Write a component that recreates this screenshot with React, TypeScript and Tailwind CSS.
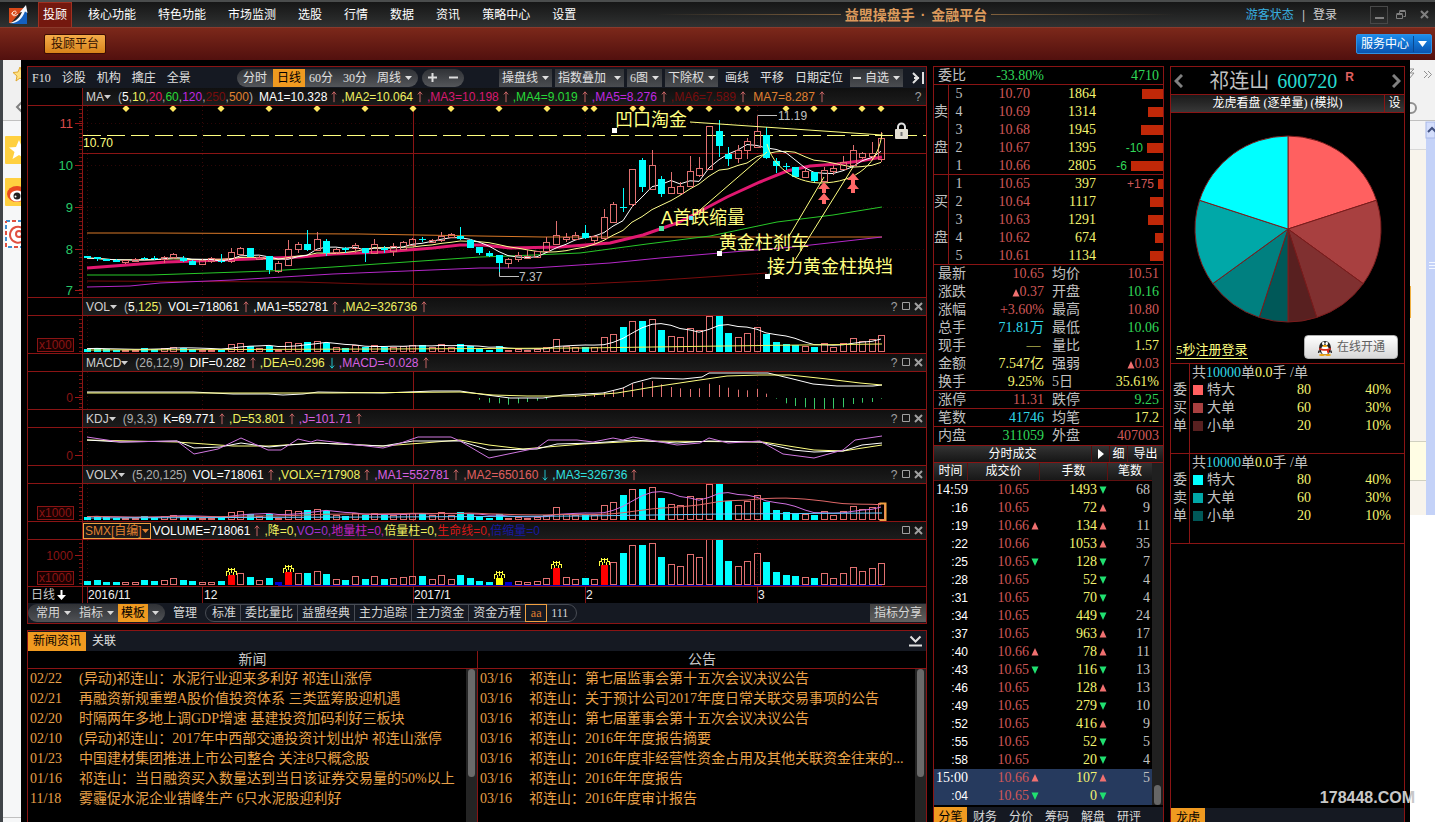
import React from 'react';

const SERIF = "font-[family-name:'Liberation_Serif','Noto_Sans_CJK_SC',serif]";
const SANS = "font-[family-name:'Liberation_Sans','Noto_Sans_CJK_SC',sans-serif]";

// [rising, high, body top, body bottom, low], in thirds of a pixel
type Candle = [number, number, number, number, number];

const CANDLES: Candle[] = [
    [0, 498, 498, 504, 504], [0, 501, 502, 507, 512], [0, 506, 507, 512, 514], [0, 508, 511, 515, 517],
    [1, 510, 511, 517, 522], [1, 505, 506, 514, 515], [0, 500, 503, 508, 510], [0, 498, 505, 507, 510],
    [1, 499, 500, 508, 520], [1, 489, 493, 500, 508], [0, 498, 503, 512, 516], [0, 510, 512, 525, 525],
    [1, 508, 509, 523, 523], [1, 500, 505, 514, 518], [0, 491, 512, 514, 518], [1, 475, 487, 513, 518],
    [1, 472, 473, 493, 495], [0, 474, 475, 502, 502], [1, 496, 501, 506, 508], [0, 498, 498, 540, 553],
    [1, 514, 519, 542, 550], [1, 450, 478, 524, 526], [1, 456, 462, 478, 490], [0, 420, 462, 480, 482],
    [1, 427, 448, 480, 482], [0, 447, 454, 490, 498], [1, 474, 476, 486, 492], [0, 472, 475, 480, 490],
    [1, 460, 466, 474, 490], [0, 474, 475, 488, 516], [1, 447, 463, 490, 492], [0, 468, 475, 479, 490],
    [1, 460, 468, 484, 498], [1, 454, 457, 478, 480], [1, 445, 447, 464, 466], [0, 440, 447, 449, 456],
    [1, 446, 449, 455, 460], [1, 427, 437, 451, 455], [1, 430, 433, 440, 442], [0, 410, 437, 448, 450],
    [0, 446, 450, 473, 475], [0, 470, 472, 490, 495], [0, 483, 489, 497, 500], [0, 495, 495, 518, 557],
    [1, 504, 506, 518, 533], [1, 487, 495, 508, 515], [1, 480, 498, 503, 506], [1, 482, 484, 500, 505],
    [1, 442, 457, 482, 485], [1, 394, 436, 462, 462], [1, 430, 440, 446, 455], [1, 427, 434, 446, 448],
    [0, 406, 430, 445, 447], [1, 436, 438, 450, 460], [1, 358, 382, 443, 445], [1, 336, 343, 397, 400],
    [0, 294, 351, 353, 365], [1, 236, 238, 343, 350], [0, 205, 210, 290, 305], [1, 180, 226, 298, 300],
    [0, 258, 267, 311, 320], [1, 246, 292, 310, 312], [1, 275, 289, 308, 315], [1, 198, 244, 289, 292],
    [1, 202, 235, 254, 260], [1, 108, 109, 238, 240], [0, 90, 124, 168, 200], [0, 170, 192, 206, 228],
    [1, 165, 181, 205, 220], [1, 143, 154, 181, 208], [1, 77, 124, 172, 175], [0, 112, 136, 204, 206],
    [0, 205, 213, 228, 248], [0, 220, 229, 231, 240], [0, 232, 232, 260, 262], [1, 238, 244, 262, 264],
    [0, 245, 247, 273, 278], [1, 230, 241, 272, 274], [1, 226, 235, 244, 255], [1, 198, 217, 238, 240],
    [1, 165, 181, 226, 228], [1, 186, 188, 200, 208], [1, 155, 190, 197, 208], [1, 127, 143, 206, 215],
];

const VOLUMES = [
    13, 15, 10, 9, 8, 9, 16, 13, 16, 21, 15, 13, 9, 9, 12, 31, 35, 24, 15, 22, 9, 38, 35, 37, 42, 33, 19, 15, 27, 18,
    27, 19, 21, 24, 27, 28, 18, 30, 18, 31, 22, 13, 9, 22, 9, 12, 9, 12, 21, 51, 24, 18, 21, 18, 59, 69, 96, 120, 121,
    126, 84, 63, 57, 93, 84, 138, 139, 73, 57, 72, 96, 70, 40, 30, 28, 24, 21, 36, 21, 36, 54, 43, 51, 66,
];

// histogram values from bar 41 onwards
const MACD_BARS = [
    -5, -14, -16, -20, -16, -12, -8, -4, 0, 0, 3, 6, 6, 14, 20, 28, 40, 44, 48, 38, 30, 26, 24, 26, 40, 36, 28, 22, 20,
    24, 10, -2, -16, -24, -28, -34, -34, -32, -28, -18, -14, -12, -2,
];

const SIGNALS = [43, 90, 138, 186, 234, 282, 330, 368, 416, 464, 502, 511, 550, 559, 607, 626, 655, 664, 703, 731, 751, 779, 798];

const barX = (i: number) => Math.round(4 + i * 9.57);
const priceY = (v: number) => Math.round(v / 3) - 16;

const average = (values: number[], span: number) =>
    values.map((_, i) => {
        const part = values.slice(Math.max(0, i - span + 1), i + 1);
        return part.reduce((a, b) => a + b, 0) / part.length;
    });

const toPoints = (values: number[], y: (v: number) => number) =>
    values.map((v, i) => `${barX(i)},${y(v).toFixed(1)}`).join(' ');

const closes = CANDLES.map(c => (c[0] ? c[2] : c[3]));

const Caret = ({ className = '' }: { className?: string }) => (
    <svg width="7" height="4" viewBox="0 0 7 4" className={`inline-block shrink-0 ${className}`}><path d="M0 0h7L3.5 4z" fill="currentColor" /></svg>
);

const Trend = ({ down = false }: { down?: boolean }) => (
    <svg width="6" height="14" viewBox="0 0 7 14" className={down ? 'mx-1 shrink-0 text-[#22dce8]' : 'mx-1 shrink-0 text-[#e07070]'}>
        <path d={down ? 'M3.5 1v12M1 10l2.500 3L6 10' : 'M3.500 13V1M1 4l2.500-3L6 4'} fill="none" stroke="currentColor" />
    </svg>
);

const Triangle = ({ down = false }: { down?: boolean }) => (
    <svg width="8" height="8" viewBox="0 0 8 8" className="inline-block shrink-0">
        <path d={down ? 'M.5.5h7L4 8z' : 'M4 0l3.500 7.500h-7z'} fill={down ? '#20e070' : '#f07070'} />
    </svg>
);

const Gutter = ({ height, box, marks = [], ticks = 4 }: { height: number; box?: boolean; marks?: [number, string, string][]; ticks?: number }) => (
    <svg className="w-[54px] shrink-0" style={{ height }} shapeRendering="crispEdges">
        {Array.from({ length: Math.floor(height / ticks) }, (_, i) => (
            <rect key={i} x="51" y={i * ticks + 3} width="3" height="1" fill="#7a1010" />
        ))}
        {marks.map(([y, label, color]) => (
            <g key={label}>
                <rect x="47" y={y} width="7" height="1" fill="#a01818" />
                <text x="45" y={y + 5} textAnchor="end" fontSize={color === '#8a1414' ? 12 : 13} fill={color}>{label}</text>
            </g>
        ))}
        {box && (
            <g>
                <rect x="9.500" y={height - 14.5} width="36" height="13" fill="#180000" stroke="#8a1414" />
                <text x="11" y={height - 4} fontSize="12" fill="#8a1414">x1000</text>
            </g>
        )}
    </svg>
);

const Grid = () => (
    <g shapeRendering="crispEdges">
        <path d="M4.500 0V200M119.500 0V200M502.500 0V200M674.500 0V200" stroke="#3a0808" strokeDasharray="1 3" />
        <rect x="330" y="0" width="1" height="200" fill="#8a1414" />
    </g>
);

interface PanelProps {
    height: number;
    gutter: React.ReactNode;
    info: React.ReactNode;
    buttons?: string;
    children: React.ReactNode;
}

const Panel: React.FC<PanelProps> = ({ height, gutter, info, buttons = '?□✕', children }) => (
    <section>
        <div className="flex h-[18px] border-b border-[#8a1414]">
            <div className="w-[55px] shrink-0 border-r border-[#8a1414]" />
            <div className="flex min-w-0 flex-1 items-center overflow-hidden whitespace-nowrap bg-linear-to-b from-[#101010] to-[#1c1c1c] pr-0.5">
                {info}
                <div className="ml-auto flex text-[#a0a0a0]">
                    {buttons.split('').map(b => (
                        <button key={b} type="button" aria-label={b === '?' ? '帮助' : b === '□' ? '放大' : '关闭'} className="flex h-[17px] w-3 items-center justify-center">
                            {b === '?' ? '?' : (
                                <svg width="9" height="9" viewBox="0 0 9 9" fill="none" stroke="currentColor">
                                    {b === '□' ? <path d="M.5.5h7v7h-7z" /> : <path d="M1 1l7 7M8 1L1 8" strokeWidth="2" />}
                                </svg>
                            )}
                        </button>
                    ))}
                </div>
            </div>
        </div>
        <div className="flex border-b border-[#8a1414]">
            <div className="flex shrink-0 border-r border-[#8a1414]">{gutter}</div>
            <svg className="min-w-0 flex-1" style={{ height }}>{children}</svg>
        </div>
    </section>
);

const Name = ({ children }: { children: React.ReactNode }) => (
    <button type="button" className="mr-[7px] flex items-center pl-[3px] text-[#d0d0d0]">{children}<Caret /></button>
);

const VolumeBars = ({ base, max, marked = false }: { base: number; max: number; marked?: boolean }) => (
    <g shapeRendering="crispEdges">
        {VOLUMES.map((v, i) => {
            const h = Math.max(2, Math.round((v / 139) * max));
            const x = barX(i) - 3;
            const special = marked ? ({ 15: '#ff0000', 21: '#ff0000', 49: '#ff0000', 54: '#ff0000', 43: '#ffff00', 20: '#0000d0', 44: '#0000d0' } as Record<number, string>)[i] : undefined;
            if (special || !CANDLES[i][0]) {
                return <rect key={i} x={x} y={base - h} width="7" height={h} fill={special ?? '#00ffff'} />;
            }
            return <rect key={i} x={x + 0.5} y={base - h + 0.5} width="6" height={h - 1} fill="none" stroke="#e07070" />;
        })}
    </g>
);

const UpArrow = ({ x, y }: { x: number; y: number }) => (
    <path d={`M${x} ${y}l6 7h-4v4h-4v-4h-4z`} fill="#ff6868" />
);

const MainChart = () => (
    <>
        <g stroke="#2c0606" strokeDasharray="1 3"><path d="M0 17.500H843M0 59.500H843M0 101.500H843M0 143.500H843" /></g>
        <Grid />
        <rect x="0" y="47" width="100%" height="1" fill="#8a1414" />
        <path d="M0 29.500H2000" stroke="#ffff80" strokeDasharray="18 6" />
        {SIGNALS.map(x => <path key={x} d={`M${x} -1l3.500 3.500-3.500 3.500-3.500-3.500z`} fill="#ffe860" />)}

        <g fill="none">
            <polyline points="4,127 67,127 277,128 397,130 460,131 799,131" stroke="#d87828" />
            <polyline points="4,175 217,176 284,178 397,179 500,178 564,175 684,167" stroke="#780c0c" />
            <polyline points="4,169 67,169 186,165 250,161 397,151 427,150 497,147 564,138 627,130 694,116 750,109 799,101" stroke="#28c828" />
            <polyline points="4,181 47,180 77,177 150,174 250,168 397,162 450,162 527,157 577,152 637,147 710,141 799,131" stroke="#b428c8" />
            <polyline points="4,162 44,159 84,156 167,153 217,151 250,148 300,146 350,142 377,139 400,139 427,142 477,141 527,137 560,129 594,117 610,109 644,91 677,76 704,65 727,60 754,58 777,55 799,51" stroke="#e01870" strokeWidth="3" />
            <polyline points={toPoints(average(closes, 10), v => v / 3 - 16)} stroke="#ffff90" />
            <polyline points={toPoints(average(closes, 5), v => v / 3 - 16)} stroke="#ffffff" />
        </g>

        <g shapeRendering="crispEdges">
            {CANDLES.map(([up, high, top, bottom, low], i) => {
                const x = barX(i);
                const y = priceY(top);
                const h = Math.max(1, priceY(bottom) - y);
                return (
                    <g key={i} fill={up ? '#e07070' : '#00ffff'}>
                        <rect x={x} y={priceY(high)} width="1" height={priceY(top) - priceY(high)} />
                        <rect x={x} y={priceY(bottom)} width="1" height={priceY(low) - priceY(bottom)} />
                        {up ? <rect x={x - 2.5} y={y + 0.5} width="6" height={h} fill="none" stroke="#e07070" /> : <rect x={x - 3} y={y} width="7" height={h} />}
                    </g>
                );
            })}
        </g>

        <g fill="none" stroke="#ffff80">
            <path d="M607 16L799 29M684 46L610 110M741 71L705 132M770 61L712 154" />
            <path d="M684 38C690 60 710 76 737 77C775 77 796 56 799 27" />
        </g>
        <g fill="none" stroke="#c0c0c0"><path d="M674.500 9.500H694M416.500 166V170.500H436" /></g>
        <text x="695" y="14" fontSize="12" fill="#c0c0c0">11.19</text>
        <text x="436" y="175" fontSize="12" fill="#c0c0c0">7.37</text>
        <text x="0" y="41" fontSize="12" fill="#ffff80">10.70</text>
        <g fontSize="18" fill="#ffff80">
            <text x="532" y="20">凹口淘金</text>
            <text x="578" y="118">A首跌缩量</text>
            <text x="636" y="143">黄金柱刹车</text>
            <text x="684" y="167">接力黄金柱换挡</text>
        </g>
        <g fill="#ffffff">
            <rect x="529" y="22" width="5" height="5" /><rect x="576" y="120" width="5" height="5" fill="#50e0a0" />
            <rect x="606" y="110" width="4" height="4" fill="#60e0ff" /><rect x="634" y="145" width="5" height="5" /><rect x="682" y="168" width="5" height="5" />
        </g>
        <UpArrow x={741} y={76} /><UpArrow x={741} y={87} /><UpArrow x={770} y={67} /><UpArrow x={770} y={76} />
        <path d="M815 24v-3a3.500 3.500 0 0 1 7 0v3" fill="none" stroke="#e0e0e0" strokeWidth="2" />
        <rect x="812" y="23" width="13" height="10" rx="1" fill="#e4e0d4" />
        <rect x="817.500" y="26" width="2" height="4" fill="#777777" />
    </>
);

const newsItems = [
    ['02/22', '(异动)祁连山：水泥行业迎来多利好 祁连山涨停'],
    ['02/21', '再融资新规重塑A股价值投资体系 三类蓝筹股迎机遇'],
    ['02/20', '时隔两年多地上调GDP增速 基建投资加码利好三板块'],
    ['02/10', '(异动)祁连山：2017年中西部交通投资计划出炉 祁连山涨停'],
    ['01/23', '中国建材集团推进上市公司整合 关注8只概念股'],
    ['01/16', '祁连山：当日融资买入数量达到当日该证券交易量的50%以上'],
    ['11/18', '雾霾促水泥企业错峰生产 6只水泥股迎利好'],
];

const notices = [
    ['03/16', '祁连山：第七届监事会第十五次会议决议公告'],
    ['03/16', '祁连山：关于预计公司2017年度日常关联交易事项的公告'],
    ['03/16', '祁连山：第七届董事会第十五次会议决议公告'],
    ['03/16', '祁连山：2016年年度报告摘要'],
    ['03/16', '祁连山：2016年度非经营性资金占用及其他关联资金往来的...'],
    ['03/16', '祁连山：2016年年度报告'],
    ['03/16', '祁连山：2016年度审计报告'],
];

const NewsColumn = ({ title, items }: { title: string; items: string[][] }) => (
    <div className="flex min-w-0 flex-col">
        <h2 className="h-[18px] border-b border-[#8a1414] text-center text-sm leading-[17px] text-[#c8c8c8]">{title}</h2>
        <div className="flex min-h-0 flex-1">
            <ul className={`min-w-0 flex-1 text-sm leading-5 text-[#e8a048] ${SERIF}`}>
                {items.map(([date, text], i) => (
                    <li key={i} className="flex h-5 whitespace-nowrap pl-0.5">
                        <span className="w-[49px] shrink-0">{date}</span>
                        <a href="#" className="min-w-0 overflow-hidden">{text}</a>
                    </li>
                ))}
            </ul>
            <div className="w-[11px] shrink-0 bg-[#242424] px-0.5">
                <div className="h-[108px] rounded-full bg-[#6a6a6a]" />
            </div>
        </div>
    </div>
);

const asks = [['5', '10.70', 1864, ''], ['4', '10.69', 1314, ''], ['3', '10.68', 1945, ''], ['2', '10.67', 1395, '-10'], ['1', '10.66', 2805, '-6']] as const;
const bids = [['1', '10.65', 397, '+175'], ['2', '10.64', 1117, ''], ['3', '10.63', 1291, ''], ['4', '10.62', 674, ''], ['5', '10.61', 1134, '']] as const;

const RED = 'text-[#d05858]';
const GREEN = 'text-[#30d858]';
const YELLOW = 'text-[#f4f470]';
const CYAN = 'text-[#30d8e8]';

type Stat = [string, string, string, string, string, string];
const stats: Stat[] = [
    ['最新', '10.65', RED, '均价', '10.51', RED],
    ['涨跌', '▲0.37', RED, '开盘', '10.16', GREEN],
    ['涨幅', '+3.60%', RED, '最高', '10.80', RED],
    ['总手', '71.81万', CYAN, '最低', '10.06', GREEN],
    ['现手', '— ', YELLOW, '量比', '1.57', YELLOW],
    ['金额', '7.547亿', YELLOW, '强弱', '▲0.03', RED],
    ['换手', '9.25%', YELLOW, '5日', '35.61%', YELLOW],
    ['涨停', '11.31', RED, '跌停', '9.25', GREEN],
    ['笔数', '41746', CYAN, '均笔', '17.2', YELLOW],
    ['内盘', '311059', GREEN, '外盘', '407003', RED],
];

// time, price, price direction, lots, lots direction, orders
const ticks = [
    ['14:59', '10.65', '', '1493', 'd', '68'], [':16', '10.65', '', '72', 'u', '9'], [':19', '10.66', 'u', '134', 'u', '11'],
    [':22', '10.66', '', '1053', 'u', '35'], [':25', '10.65', 'd', '128', 'd', '7'], [':28', '10.65', '', '52', 'd', '4'],
    [':31', '10.65', '', '70', 'd', '4'], [':34', '10.65', '', '449', 'd', '24'], [':37', '10.65', '', '963', 'u', '17'],
    [':40', '10.66', 'u', '78', 'u', '11'], [':43', '10.65', 'd', '116', 'd', '13'], [':46', '10.65', '', '128', 'u', '13'],
    [':49', '10.65', '', '279', 'd', '10'], [':52', '10.65', '', '416', 'u', '9'], [':55', '10.65', '', '52', 'd', '5'],
    [':58', '10.65', '', '20', 'd', '4'], ['15:00', '10.66', 'u', '107', 'u', '5'], [':04', '10.65', 'd', '0', 'd', ''],
];

const BookSide = ({ side, rows }: { side: string; rows: typeof asks | typeof bids }) => (
    <tbody>
        {rows.map(([level, price, volume, delta], i) => {
            const line = i === 4 ? 'border-b border-[#8a1414] leading-[17px]' : 'leading-[18px]';
            return (
                <tr key={level}>
                    {i === 0 && (
                        <th rowSpan={5} className="border-r border-b border-[#8a1414] text-center font-normal leading-9 text-[#c0c0c0]">
                            {side}<br />盘
                        </th>
                    )}
                    <td className={`text-center text-[#c0c0c0] ${line}`}>{level}</td>
                    <td className={`text-right ${RED} ${line}`}>{price}</td>
                    <td className={`text-right ${YELLOW} ${line}`}>{volume}</td>
                    <td className={line}>
                        <div className="flex h-[17px] items-center justify-end gap-1">
                            <span className={`text-xs ${SANS} ${delta.startsWith('+') ? 'text-[#d05858]' : 'text-[#30d858]'}`}>{delta}</span>
                            <span className="h-2.5 bg-[#c02808]" style={{ width: Math.round((volume / 2805) * 32) }} />
                        </div>
                    </td>
                </tr>
            );
        })}
    </tbody>
);

const StatValue = ({ value, color }: { value: string; color: string }) => (
    <dd className={`whitespace-pre ${color}`}>{value.startsWith('▲') ? <><Triangle />{value.slice(1)}</> : value}</dd>
);

const QuotePanel = () => (
    <div className={`flex w-[231px] shrink-0 flex-col border border-b-0 border-[#8a1414] text-sm ${SERIF}`}>
        <div className="flex h-[18px] justify-between whitespace-nowrap border-b border-[#8a1414] pr-1 leading-[17px]">
            <div className="flex w-[110px] justify-between pl-1">
                <span className="text-[#c0c0c0]">委比</span>
                <span className="text-[#30d858]">-33.80%</span>
            </div>
            <span className="text-[#30d858]">4710</span>
        </div>
        <table className="w-full table-fixed border-separate border-spacing-0">
            <colgroup><col className="w-[15px]" /><col className="w-5" /><col className="w-[61px]" /><col className="w-[66px]" /><col /></colgroup>
            <BookSide side="卖" rows={asks} />
            <BookSide side="买" rows={bids} />
        </table>
        <dl>
            {stats.map(([a, av, ac, b, bv, bc], i) => (
                <div key={a} className={i > 5 && i < 9 ? 'flex h-[18px] border-b border-[#8a1414] leading-[17px]' : 'flex h-[18px] leading-[18px]'}>
                    <div className="flex w-[110px] justify-between pl-1">
                        <dt className="text-[#c0c0c0]">{a}</dt><StatValue value={av} color={ac} />
                    </div>
                    <div className="flex flex-1 justify-between pl-2 pr-1">
                        <dt className="text-[#c0c0c0]">{b}</dt><StatValue value={bv} color={bc} />
                    </div>
                </div>
            ))}
        </dl>
        <div className="flex h-[18px] border-y border-[#8a1414] bg-linear-to-b from-[#333333] to-[#161616] text-xs leading-4 text-white">
            <h2 className="flex-1 text-center">分时成交</h2>
            <button type="button" aria-label="展开" className="flex w-[18px] items-center justify-center border-l border-[#501010]"><svg width="6" height="10"><path d="M0 0l6 5-6 5z" fill="#fff" /></svg></button>
            <button type="button" className="w-[18px] border-l border-[#501010]">细</button>
            <button type="button" className="w-9 border-l border-[#501010]">导出</button>
        </div>
        <div className="flex">
            <table className="flex-1 table-fixed border-separate border-spacing-0">
                <colgroup><col className="w-[34px]" /><col className="w-[72px]" /><col className="w-[68px]" /><col className="w-[44px]" /></colgroup>
                <thead>
                    <tr className="bg-linear-to-b from-[#333333] to-[#161616] text-xs leading-[17px] text-white">
                        {['时间', '成交价', '手数', '笔数'].map(h => <th key={h} className="border-r border-b border-[#601010] font-normal last:border-r-0">{h}</th>)}
                    </tr>
                </thead>
                <tbody>
                    {ticks.map(([time, price, pd, lots, ld, orders], i) => (
                        <tr key={i} className={i > 15 ? 'bg-[#263a5e]' : ''}>
                            <td className={time.length > 3 ? 'text-right leading-[18px] text-white' : "text-right text-xs leading-[18px] text-white font-[family-name:'Liberation_Sans',sans-serif]"}>{time}</td>
                            <td className="leading-[18px] text-[#d05858]">
                                <div className="flex items-center justify-end">{price}<span className="flex w-[11px] pl-0.5">{pd && <Triangle down={pd === 'd'} />}</span></div>
                            </td>
                            <td className="leading-[18px] text-[#f4f470]">
                                <div className="flex items-center justify-end">{lots}<span className="flex w-[11px] pl-0.5"><Triangle down={ld === 'd'} /></span></div>
                            </td>
                            <td className="pr-0.5 text-right leading-[18px] text-[#c0c0c0]">{orders}</td>
                        </tr>
                    ))}
                </tbody>
            </table>
            <div className="flex w-[11px] flex-col justify-end bg-[#202020] px-0.5">
                <div className="h-5 rounded-full bg-[#666666]" />
            </div>
        </div>
        <nav className={`mt-0.5 flex h-5 shrink-0 bg-[#151922] text-xs leading-5 text-[#d8d8d8] ${SANS}`}>
            <button type="button" className="w-[33px] bg-[#f09a20] text-black">分笔</button>
            {['财务', '分价', '筹码', '解盘', '研评'].map(t => <button key={t} type="button" className="w-9">{t}</button>)}
        </nav>
    </div>
);

const SLICES: [number, number, string][] = [
    [0, 72, '#ff6060'], [72, 126, '#a84040'], [126, 162, '#803030'], [162, 180, '#582020'],
    [180, 198, '#005858'], [198, 234, '#008080'], [234, 288, '#00a8a8'], [288, 360, '#00ffff'],
];

const slicePath = (from: number, to: number) => {
    const at = (deg: number) => {
        const rad = (deg * Math.PI) / 180;
        return `${(94 + 93 * Math.sin(rad)).toFixed(2)} ${(94 - 93 * Math.cos(rad)).toFixed(2)}`;
    };
    return `M94 94L${at(from)}A93 93 0 0 1 ${at(to)}Z`;
};

const OrderGroup = ({ side, colors }: { side: string[]; colors: string[] }) => (
    <div className="flex h-[90px] border-t border-[#8a1414] text-sm leading-[18px] text-[#c0c0c0]">
        <div className="flex w-[19px] shrink-0 flex-col items-center border-r border-[#8a1414] pt-[17px]">
            {side.map(s => <span key={s}>{s}</span>)}
        </div>
        <div className="flex-1">
            <p className="h-[17px] pl-0.5 leading-[17px]">共<span className={CYAN}>10000</span>单<span className={YELLOW}>0.0</span>手 /单</p>
            <table className="w-full table-fixed">
                <tbody>
                    {[['特大', '80', '40%'], ['大单', '60', '30%'], ['小单', '20', '10%']].map(([name, count, pct], i) => (
                        <tr key={name}>
                            <td className="w-[60px]">
                                <div className="flex items-center gap-1 pl-[3px]"><span className="size-2.5" style={{ background: colors[i] }} />{name}</div>
                            </td>
                            <td className={`w-[61px] text-right ${YELLOW}`}>{count}</td>
                            <td className={`pr-[13px] text-right ${YELLOW}`}>{pct}</td>
                        </tr>
                    ))}
                </tbody>
            </table>
        </div>
    </div>
);

const StockPanel = () => (
    <div className={`flex w-[235px] shrink-0 flex-col border border-b-0 border-[#8a1414] ${SERIF}`}>
        <div className="flex h-7 items-center justify-between border-b border-[#8a1414] px-[3px] text-[#808080]">
            <button type="button" aria-label="上一只"><svg width="9" height="14" viewBox="0 0 9 14" fill="none" stroke="currentColor" strokeWidth="3"><path d="M8 1L2 7l6 6" /></svg></button>
            <h1 className="mr-3 flex items-center text-xl leading-7 text-[#c0c0c0]">祁连山<span className="ml-2 text-[#28dcd0]">600720</span><span className={`ml-2 self-start text-xs font-bold leading-5 text-[#e06060] ${SANS}`}>R</span></h1>
            <button type="button" aria-label="下一只"><svg width="9" height="14" viewBox="0 0 9 14" fill="none" stroke="currentColor" strokeWidth="3"><path d="M1 1l6 6-6 6" /></svg></button>
        </div>
        <div className="flex h-[18px] border-b border-[#8a1414] bg-linear-to-b from-[#1a1a1a] to-[#383838] text-xs leading-[17px] text-white">
            <h2 className="flex-1 text-center">龙虎看盘 (逐单量) (模拟)</h2>
            <button type="button" className="w-5 border-l border-[#8a1414]">设</button>
        </div>
        <div className="flex justify-center pt-[22px]">
            <svg width="188" height="188" viewBox="0 0 188 188">
                {SLICES.map(([from, to, color]) => <path key={from} d={slicePath(from, to)} fill={color} stroke="#7a1c1c" />)}
            </svg>
        </div>
        <div className="flex items-end justify-between pb-1 pl-[5px] pr-1.5 pt-3">
            <a href="#" className="border-b border-[#ffff80] text-[13px] leading-4 text-[#ffff80]">5秒注册登录</a>
            <button type="button" className="flex h-6 items-center gap-1 rounded-sm border border-[#b0b0b0] bg-linear-to-b from-white to-[#d8d8d8] px-3 text-xs text-[#606060]">
                <svg width="16" height="17" viewBox="0 0 16 17">
                    <path d="M2 11c-2 3-1 4 1 2zM14 11c2 3 1 4-1 2z" fill="#222" />
                    <ellipse cx="8" cy="9" rx="6" ry="7" fill="#222" />
                    <ellipse cx="8" cy="11" rx="4" ry="4.500" fill="#fff" />
                    <ellipse cx="6.300" cy="4.500" rx="1.300" ry="1.700" fill="#fff" /><ellipse cx="9.700" cy="4.500" rx="1.300" ry="1.700" fill="#fff" />
                    <ellipse cx="8" cy="7" rx="2.500" ry="1" fill="#f0a000" />
                    <path d="M2.500 8.500c3 2 8 2 11 0l.5 2c-3 1.500-8 2-12 0z" fill="#d82818" />
                    <path d="M10 10l2 0v4l-2-.5z" fill="#d82818" />
                    <ellipse cx="5" cy="16" rx="3" ry="1" fill="#f0a000" /><ellipse cx="11" cy="16" rx="3" ry="1" fill="#f0a000" />
                </svg>
                在线开通
            </button>
        </div>
        <OrderGroup side={['委', '买', '单']} colors={['#ff6060', '#a84040', '#582020']} />
        <OrderGroup side={['委', '卖', '单']} colors={['#00ffff', '#00a8a8', '#005858']} />
        <div className="flex-1 border-t border-[#8a1414]" />
        <nav className="flex h-[14px] shrink-0 bg-[#151922] text-xs leading-5">
            <button type="button" className="h-5 w-[34px] bg-[#f09a20] text-black">龙虎</button>
        </nav>
    </div>
);

const TOOL = 'flex h-[18px] items-center justify-between gap-1 bg-linear-to-b from-[#303236] to-[#4a4c50] px-[3px]';

const ChartToolbar = () => (
    <div className={`flex h-[21px] items-center whitespace-nowrap bg-[#151922] text-[#e0e0e0] ${SERIF}`}>
        <div className="flex w-[209px] shrink-0 gap-[11px] pl-1">
            {['F10', '诊股', '机构', '擒庄', '全景'].map(t => <button key={t} type="button">{t}</button>)}
        </div>
        <div className="flex h-[18px] items-center rounded-full bg-linear-to-b from-[#303236] to-[#54565a] pl-1.5 pr-1.5">
            <button type="button" className="mr-1.5">分时</button>
            <button type="button" className="h-[18px] bg-[#f09a20] px-1 text-black">日线</button>
            <button type="button" className="ml-1 mr-2.5">60分</button>
            <button type="button" className="mr-2.5">30分</button>
            <button type="button" className="flex items-center gap-1">周线<Caret /></button>
        </div>
        <div className="ml-1 flex h-[18px] items-center gap-3 rounded-full bg-linear-to-b from-[#303236] to-[#54565a] px-1.5">
            <button type="button" aria-label="放大"><svg width="9" height="9"><path d="M0 4.500h9M4.500 0v9" stroke="#ddd" strokeWidth="2" /></svg></button>
            <button type="button" aria-label="缩小"><svg width="9" height="9"><path d="M0 4.500h9" stroke="#ddd" strokeWidth="2" /></svg></button>
        </div>
        <div className="ml-auto flex items-center gap-[3px] pr-px">
            <button type="button" className={TOOL}>操盘线<Caret /></button>
            <button type="button" className={TOOL}>指数叠加<Caret className="ml-1" /></button>
            <button type="button" className={TOOL}>6图<Caret /></button>
            <button type="button" className={TOOL}>下除权<Caret /></button>
            <div className="flex gap-[11px] px-1">
                {['画线', '平移', '日期定位'].map(t => <button key={t} type="button">{t}</button>)}
            </div>
            <button type="button" className={TOOL}><svg width="8" height="2"><path d="M0 1h8" stroke="#ddd" strokeWidth="2" /></svg>自选<Caret /></button>
            <button type="button" aria-label="收起侧栏" className="ml-1.5"><svg width="13" height="12" viewBox="0 0 13 12" fill="none" stroke="#e0e0e0" strokeWidth="2"><path d="M1 1l5 5-5 5M2 6h5M11 0v12" /></svg></button>
        </div>
    </div>
);

const ChartPanels = () => (
    <div className="border border-[#8a1414]">
        <ChartToolbar />
        <Panel
            height={191}
            buttons="?"
            gutter={<Gutter height={191} marks={[[17, '11', '#d84848'], [59, '10', '#28c868'], [101, '9', '#28c868'], [143, '8', '#28c868'], [184, '7', '#28c868']]} />}
            info={<>
                <Name>MA</Name>
                <span className="mr-1.5 text-[#b0b0b0]">(<span className="text-white">5</span>,<span className="text-[#f0f060]">10</span>,<span className="text-[#e01870]">20</span>,<span className="text-[#28d838]">60</span>,<span className="text-[#c028e0]">120</span>,<span className="text-[#780c0c]">250</span>,<span className="text-[#e08030]">500</span>)</span>
                <span className="text-white">MA1=10.328</span><Trend />
                <span className="text-[#f0f060]">,MA2=10.064</span><Trend />
                <span className="text-[#d81870]">,MA3=10.198</span><Trend />
                <span className="text-[#28d838]">,MA4=9.019</span><Trend />
                <span className="text-[#c028e0]">,MA5=8.276</span><Trend />
                <span className="text-[#780c0c]">,MA6=7.589</span><Trend />
                <span className="text-[#e08030]">&nbsp;MA7=8.287</span><Trend />
            </>}
        >
            <MainChart />
        </Panel>
        <Panel
            height={37}
            gutter={<Gutter height={37} box />}
            info={<>
                <Name>VOL</Name>
                <span className="mr-1.5 text-[#b0b0b0]">(<span className="text-white">5</span>,<span className="text-[#f0f060]">125</span>)</span>
                <span className="text-white">VOL=718061</span><Trend />
                <span className="text-white">,MA1=552781</span><Trend />
                <span className="text-[#f0f060]">,MA2=326736</span><Trend />
            </>}
        >
            <Grid />
            <VolumeBars base={36} max={36} />
            <polyline points={toPoints(average(VOLUMES, 5), v => 36 - v * 0.26)} fill="none" stroke="#ffffff" />
            <polyline points="4,34 300,33 500,32 640,30 799,28" fill="none" stroke="#f0f060" />
        </Panel>
        <Panel
            height={37}
            gutter={<Gutter height={37} marks={[[25, '0', '#8a1414']]} />}
            info={<>
                <Name>MACD</Name>
                <span className="mr-1.5 text-[#b0b0b0]">(26,12,9)</span>
                <span className="text-white">DIF=0.282</span><Trend />
                <span className="text-[#f0f060]">,DEA=0.296</span><Trend down />
                <span className="text-[#d860e0]">,MACD=-0.028</span><Trend />
            </>}
        >
            <Grid />
            {MACD_BARS.map((v, i) => (
                <rect key={i} x={barX(i + 41)} y={v > 0 ? 25 - v / 3 : 26} width="1" height={Math.abs(v) / 3} fill={v > 0 ? '#e07070' : '#38c868'} />
            ))}
            <g fill="none">
                <polyline points="4,20 30,20 110,20 150,22 185,22 200,23 220,22 235,20 300,21 350,19 377,19 404,23 427,26 460,26 480,23 520,21 540,16 550,11 569,6 600,7 619,5 626,1 685,1 710,7 730,12 754,14 790,14 799,13" stroke="#ffffff" />
                <polyline points="4,21 250,21 377,20 410,23 444,24 494,24 534,21 570,15 610,9 644,4 677,3 707,3 744,7 777,11 799,13" stroke="#ffff80" />
            </g>
        </Panel>
        <Panel
            height={37}
            gutter={<Gutter height={37} marks={[[27, '0', '#8a1414']]} ticks={10} />}
            info={<>
                <Name>KDJ</Name>
                <span className="mr-1.5 text-[#b0b0b0]">(9,3,3)</span>
                <span className="text-white">K=69.771</span><Trend />
                <span className="text-[#f0f060]">,D=53.801</span><Trend />
                <span className="text-[#d860e0]">,J=101.71</span><Trend />
            </>}
        >
            <Grid />
            <g fill="none">
                <polyline points="4,12 94,14 150,18 186,18 234,15 300,18 340,15 377,12 406,17 440,21 500,16 560,13 680,14 731,22 760,23 799,17" stroke="#ffff80" />
                <polyline points="4,12 37,14 94,13 111,20 137,19 158,15 186,19 206,17 234,15 300,18 330,13 377,13 406,22 454,21 474,16 510,15 550,12 594,15 626,13 677,14 710,22 731,24 760,23 779,17 799,15" stroke="#ffffff" />
                <polyline points="4,9 37,14 94,13 111,26 135,21 158,10 185,22 198,22 215,11 228,14 234,12 300,20 315,16 335,9 368,9 377,13 406,30 454,20 465,12 494,12 510,14 530,10 540,12 550,9 594,17 617,15 626,10 645,15 677,13 700,26 731,30 760,22 772,12 799,8" stroke="#d078e0" />
            </g>
        </Panel>
        <Panel
            height={37}
            gutter={<Gutter height={37} box />}
            info={<>
                <Name>VOLX</Name>
                <span className="mr-1.5 text-[#b0b0b0]">(5,20,125)</span>
                <span className="text-white">VOL=718061</span><Trend />
                <span className="text-[#f0f060]">,VOLX=717908</span><Trend />
                <span className="text-[#d860e0]">,MA1=552781</span><Trend />
                <span className="text-[#e06060]">,MA2=650160</span><Trend down />
                <span className="text-[#30e0e0]">,MA3=326736</span><Trend />
            </>}
        >
            <Grid />
            <VolumeBars base={36} max={36} />
            <g fill="none">
                <polyline points={toPoints(average(VOLUMES, 5), v => 36 - v * 0.26)} stroke="#d070e0" />
                <polyline points={toPoints(average(VOLUMES, 20), v => 36 - v * 0.26)} stroke="#e06868" />
                <polyline points="4,34 300,33 500,32 640,30 799,29" stroke="#60c8ff" />
                <path d="M796.500 19.500h6v17h-6" stroke="#f0a040" strokeWidth="2" />
            </g>
        </Panel>
        <Panel
            height={46}
            buttons="□✕"
            gutter={<Gutter height={46} box marks={[[15, '1000', '#8a1414']]} />}
            info={<>
                <button type="button" className="mr-0.5 flex h-4 items-center border border-[#f0a040] px-px text-[#e08030]">SMX[自编]<Caret /></button>
                <span className="text-white">VOLUME=718061</span><Trend />
                <span className="text-[#f0f060]">,降=0,</span>
                <span className="text-[#a030d0]">VO=0,</span>
                <span className="text-[#c020c0]">地量柱=0,</span>
                <span className="text-[#f0f060]">倍量柱=0,</span>
                <span className="text-[#d81818]">生命线=0,</span>
                <span className="text-[#1818a0]">倍缩量=0</span>
            </>}
        >
            <Grid />
            <path d="M195 45.500H799" stroke="#0000b0" />
            <VolumeBars base={45} max={46} marked />
            {[15, 21, 43, 49, 54].map(i => (
                <path key={i} transform={`translate(${barX(i) - 5} ${38 - Math.round(VOLUMES[i] / 3)})`} d="M0.500 8V3.500h2V1.500h6v2h2v3M2.500 0v2M5.500 0v5M8.500 0v2M3.500 4v3M7.500 4v3" fill="none" stroke="#ffff40" shapeRendering="crispEdges" />
            ))}
        </Panel>
        <div className="flex h-4 leading-4">
            <div className="flex w-[55px] shrink-0 items-center gap-0.5 border-r border-[#8a1414] pl-[3px] text-[#c8c8c8]">
                日线<svg width="9" height="11" viewBox="0 0 9 11"><path d="M3.500 0h2v5H9L4.500 10 0 5h3.500z" fill="#fff" /></svg>
            </div>
            <svg className="h-4 min-w-0 flex-1 text-xs" fill="#f0f0f0">
                <path d="M4.500 0v16M119.500 0v16M330.500 0v16M502.500 0v16M674.500 0v16" stroke="#8a1414" />
                <text x="5" y="12">2016/11</text><text x="121" y="12">12</text><text x="331" y="12">2017/1</text><text x="503" y="12">2</text><text x="675" y="12">3</text>
            </svg>
        </div>
        <div className="flex h-5 items-center whitespace-nowrap bg-[#151922] text-[#d8d8d8]">
            <div className="flex h-[18px] items-center rounded-full bg-linear-to-b from-[#303236] to-[#505256] pl-2 pr-1.5">
                <button type="button" className="mr-2 flex items-center gap-1">常用<Caret /></button>
                <button type="button" className="mr-1 flex items-center gap-1">指标<Caret /></button>
                <button type="button" className="flex h-[18px] items-center bg-[#f09a20] px-[3px] text-black">模板</button>
                <Caret className="ml-1" />
            </div>
            <button type="button" className="ml-2 mr-2">管理</button>
            <div className="flex h-[18px] items-center rounded-full border border-[#484c54] leading-4">
                <button type="button" className="h-4 border-r border-[#484c54] pl-1.5 pr-1">标准</button>
                {['委比量比', '益盟经典', '主力追踪', '主力资金'].map(t => <button key={t} type="button" className="h-4 border-r border-[#484c54] px-1">{t}</button>)}
                <button type="button" className="h-4 px-1">资金方程</button>
                <button type="button" className={`h-[18px] w-[22px] border border-[#f0a040] text-[#e08030] ${SERIF}`}>aa</button>
                <button type="button" className={`pl-1 pr-2 ${SERIF}`}>111</button>
            </div>
            <button type="button" className="ml-auto h-[18px] bg-linear-to-b from-[#404040] to-[#606060] px-1">指标分享</button>
        </div>
    </div>
);

const NewsPanel = () => (
    <div className="mt-1.5 flex min-h-0 flex-1 flex-col border border-b-0 border-[#8a1414]">
        <div className="flex h-5 shrink-0 items-center bg-[#151922] pr-1">
            <button type="button" className="h-[19px] w-[58px] bg-[#f09a20] text-black">新闻资讯</button>
            <button type="button" className="ml-1.5 text-[#e0e0e0]">关联</button>
            <button type="button" aria-label="收起" className="ml-auto"><svg width="13" height="12" viewBox="0 0 13 12" fill="none" stroke="#e0e0e0" strokeWidth="2"><path d="M1.500 1.500l5 5 5-5M0 10.500h13" /></svg></button>
        </div>
        <div className="grid min-h-0 flex-1 grid-cols-2">
            <NewsColumn title="新闻" items={newsItems} />
            <div className="grid min-h-0 border-l border-[#8a1414]"><NewsColumn title="公告" items={notices} /></div>
        </div>
    </div>
);

const TitleBar = () => (
    <header>
        <div className="flex h-[27px] items-center whitespace-nowrap border-t-2 border-[#4a4c4c] bg-linear-to-b from-[#161616] to-[#303232] pl-2 text-white">
            <svg width="20" height="20" viewBox="0 0 20 20" className="mr-2.5 shrink-0">
                <path d="M1 3h15L3 18H1z" fill="#d84818" />
                <path d="M19 5v14H4z" fill="#1460c0" />
                <path d="M1 18C8 17 12 12 14 7l-2.500.5L18 0l1.500 8-2.500-1.500C14 14 9 19 1 18z" fill="#f4f8ff" />
                <path d="M4 8c2-3 5-2 4 0s-4 2-4 0c0 4 4 3 6 1" fill="none" stroke="#ffe8d8" />
            </svg>
            <nav className="flex items-center gap-[22px]">
                <button type="button" className="-mr-1.5 h-[25px] border border-b-0 border-[#a03020] bg-[#74180f] px-1">投顾</button>
                {['核心功能', '特色功能', '市场监测', '选股', '行情', '数据', '资讯', '策略中心', '设置'].map(t => <button key={t} type="button">{t}</button>)}
            </nav>
            <div className="ml-20 h-px flex-1 bg-linear-to-r from-transparent to-[#80603c]" />
            <h1 className="mx-1 text-sm font-bold text-[#dc9a5c]">益盟操盘手<span className="mx-1.5">·</span>金融平台</h1>
            <div className="mr-[70px] h-px flex-1 bg-linear-to-r from-[#80603c] to-transparent" />
            <a href="#" className="text-[#38b0e0]">游客状态</a>
            <span className="mx-2 text-[#c0c0c0]">|</span>
            <a href="#" className="text-[#d0d0d0]">登录</a>
            <div className="ml-[33px] flex items-center gap-2 pr-1.5 text-[#808080]">
                <button type="button" aria-label="最小化" className="flex size-[18px] items-end justify-center border border-[#484848] pb-1"><svg width="9" height="2"><path d="M0 1h9" stroke="currentColor" strokeWidth="2" /></svg></button>
                <button type="button" aria-label="还原"><svg width="10" height="10" viewBox="0 0 10 10" fill="none" stroke="currentColor"><path d="M3.500 3V1.500h6v5H7.500M.5 4.500h6v4h-6zM.5 3.500h6M3.500.5h6" /></svg></button>
                <button type="button" aria-label="关闭" className="ml-1.5"><svg width="9" height="9" viewBox="0 0 9 9" stroke="currentColor" strokeWidth="2"><path d="M1 1l7 7M8 1L1 8" /></svg></button>
            </div>
        </div>
        <div className="flex h-[33px] items-center justify-between border-t border-[#8a3a2c] bg-linear-to-b from-[#7c281a] to-[#52100e] pl-11 pr-[3px]">
            <button type="button" className="h-5 rounded-xs border border-[#3c0c04] bg-linear-to-b from-[#f4ac48] to-[#d88418] px-[6px] text-[#301000]">投顾平台</button>
            <button type="button" className="flex h-5 items-center rounded-xs border border-[#3090e0] bg-linear-to-b from-[#1c8cec] to-[#0a54b0] pl-1 text-white">
                服务中心<span className="ml-1 flex h-4 items-center border-l border-[#0a4890] px-1"><svg width="9" height="6"><path d="M0 0h9L4.500 6z" fill="#fff" /></svg></span>
            </button>
        </div>
    </header>
);

// the browser window that shows on both sides of the terminal
const LeftEdge = () => (
    <div className="w-[21px] shrink-0 overflow-hidden border-l-[3px] border-[#404448] bg-[#f6f7f8]">
        <svg width="36" height="762" fill="none">
            <rect width="36" height="60" fill="#f0f0f0" />
            <path d="M17 7l2 5 5 .5-4 3.500 1 5-4-3-4 3 1-5-4-3.500 5-.5z" fill="#ffe080" stroke="#e0a830" />
            <path d="M19 42l-5 5 5 5" stroke="#808080" strokeWidth="2" />
            <path d="M0 60.500h36M0 757.500h36" stroke="#c0c0c0" />
            <rect x="2" y="76" width="28" height="28" rx="1" fill="#ffd040" />
            <path d="M16 80l3 7 7 .5-5.500 4.500 2 7-6.500-4-6.500 4 2-7-5.500-4.500 7-.5z" fill="#fff" />
            <rect x="2" y="118" width="28" height="28" rx="1" fill="#ffd040" />
            <ellipse cx="14" cy="134" rx="10" ry="8" fill="#e84820" /><ellipse cx="14" cy="136" rx="7" ry="5.500" fill="#fff" />
            <circle cx="14" cy="136" r="3.500" fill="#202020" /><circle cx="12.500" cy="136.500" r="1" fill="#fff" />
            <rect x="3" y="161" width="26" height="26" fill="#fff" stroke="#4090d0" strokeWidth="2" strokeDasharray="4 8" />
            <rect x="3" y="161" width="26" height="26" stroke="#e05040" strokeWidth="2" strokeDasharray="4 8" strokeDashoffset="6" />
            <circle cx="16" cy="174" r="3" stroke="#e05040" strokeWidth="2" /><path d="M20 181a8 8 0 1 1 3-7" stroke="#e05040" strokeWidth="2" />
        </svg>
    </div>
);

const RightEdge = () => (
    <div className="w-[25px] shrink-0 overflow-hidden bg-white">
        <svg width="25" height="762" fill="none">
            <rect width="25" height="60" fill="#f2f2f2" />
            <path d="M0 9h4l-4 4M0 13h4l-5 6M14 11l3.500 3.500-3.500 3.500M18 11l3.500 3.500-3.500 3.500" stroke="#909090" />
            <circle cx="1" cy="48" r="5" stroke="#909090" strokeWidth="2" />
            <path d="M0 60.500h25" stroke="#c0c0c0" />
            <rect y="61" width="16" height="28" fill="#f4f4f4" />
            <rect y="89" width="16" height="366" fill="#f8f4ec" /><path d="M0 89.500h16" stroke="#d8d8d8" />
            <rect y="226" width="1" height="32" fill="#f0b040" />
            <rect y="381" width="16" height="40" fill="#fffde4" /><path d="M0 381.500h16M0 420.500h16" stroke="#d0d0c0" />
            <rect x="16" y="62" width="9" height="393" fill="#c4d2f8" />
            <rect x="16" y="62" width="9" height="16" fill="#d4defc" stroke="#a8b8e8" />
            <path d="M18 72l4-4 4 4" stroke="#405080" strokeWidth="2" />
            <path d="M19 202.500h6M19 205.500h6M19 208.500h6" stroke="#f4f8ff" />
        </svg>
    </div>
);

const App: React.FC = () => {
    return (
        <div className={`relative flex h-screen flex-col overflow-hidden bg-black text-xs ${SANS}`}>
            <TitleBar />
            <div className="flex min-h-0 flex-1">
                <LeftEdge />
                <main className="flex min-w-0 flex-1 gap-1.5 bg-black pl-1.5 pr-[5px] pt-1.5">
                    <div className="flex min-w-0 flex-1 flex-col">
                        <ChartPanels />
                        <NewsPanel />
                    </div>
                    <QuotePanel />
                    <StockPanel />
                </main>
                <RightEdge />
            </div>
            <p className="absolute bottom-3 right-5 text-base font-bold text-[#c8c8c8]">178448.COM</p>
        </div>
    );
};

export default App;
